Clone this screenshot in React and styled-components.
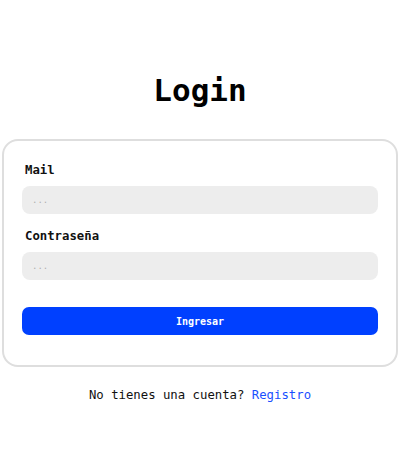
import React from 'react';
import styled, { createGlobalStyle } from 'styled-components';

const GlobalStyle = createGlobalStyle`
  body {
    margin: 0;
    background: #ffffff;
    font-family: 'DejaVu Sans Mono', monospace;
  }
`;

const Page = styled.div`
  display: flex;
  flex-direction: column;
  align-items: center;
  padding: 0 2px;
`;

const Title = styled.h1`
  margin: 71px 0 30px;
  font-size: 31px;
  font-weight: bold;
  color: #000;
  line-height: 38px;
`;

const Card = styled.form`
  box-sizing: border-box;
  width: 100%;
  border: 2px solid #dedede;
  border-radius: 16px;
  padding: 18px 18px 30px;
  display: flex;
  flex-direction: column;
`;

const Label = styled.label`
  font-size: 12.3px;
  font-weight: bold;
  color: #111;
  margin: 4px 0 8px 3px;
  line-height: 15px;
`;

const Input = styled.input`
  box-sizing: border-box;
  height: 28px;
  border: none;
  border-radius: 8px;
  background: #ededed;
  padding: 0 10px;
  font-family: 'DejaVu Sans Mono', monospace;
  font-size: 9px;
  margin-bottom: ${(p) => p.$gap}px;
  &::placeholder {
    color: #b0b0b0;
  }
`;

const Button = styled.button`
  height: 28px;
  border: none;
  border-radius: 7px;
  background: #0040ff;
  color: #fff;
  font-family: 'DejaVu Sans Mono', monospace;
  font-weight: bold;
  font-size: 10px;
`;

const Footer = styled.p`
  margin: 21px 0 0;
  font-size: 12.3px;
  color: #111;
`;

const Link = styled.a`
  color: #1a4fff;
  text-decoration: none;
`;

export default function App() {
  return (
    <>
      <GlobalStyle />
      <Page>
        <Title>Login</Title>
        <Card onSubmit={(e) => e.preventDefault()}>
          <Label>Mail</Label>
          <Input placeholder="..." $gap={11} />
          <Label>Contraseña</Label>
          <Input type="password" placeholder="..." $gap={27} />
          <Button type="submit">Ingresar</Button>
        </Card>
        <Footer>
          No tienes una cuenta? <Link href="#">Registro</Link>
        </Footer>
      </Page>
    </>
  );
}
